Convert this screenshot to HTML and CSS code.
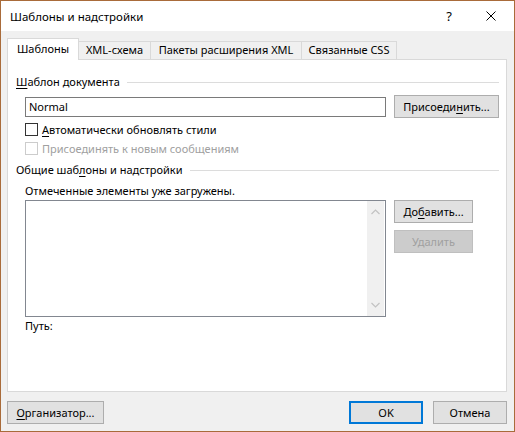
FILE: index.html
```html
<!DOCTYPE html>
<html lang="ru">
<head>
<meta charset="utf-8">
<title>Шаблоны и надстройки</title>
<link rel="stylesheet" href="styles.css">
</head>
<body>
<div class="window">
  <div class="titlebar">
    <span class="title">Шаблоны и надстройки</span>
    <span class="help">?</span>
    <span class="close">
      <svg width="10" height="10" viewBox="0 0 10 10"><path d="M0.5 0.5 L9.5 9.5 M9.5 0.5 L0.5 9.5" stroke="#000" stroke-width="1" fill="none"/></svg>
    </span>
  </div>
  <div class="client">
    <div class="tabs">
      <div class="tab tab-templates active">Шаблоны</div>
      <div class="tab tab-schema">XML-схема</div>
      <div class="tab tab-packs">Пакеты расширения XML</div>
      <div class="tab tab-css">Связанные CSS</div>
    </div>
    <div class="panel">
      <div class="group-head"><span><u>Ш</u>аблон документа</span><span class="rule"></span></div>
      <div class="indent">
        <div class="input-row">
          <div class="textbox">Normal</div>
          <div class="btn btn-attach">Присоеди<u>н</u>ить...</div>
        </div>
        <div class="check-row"><span class="checkbox"></span><span><u>А</u>втоматически обновлять стили</span></div>
        <div class="check-row disabled"><span class="checkbox"></span><span>Присоединять к новым сообщениям</span></div>
      </div>
      <div class="group-head group-head-2"><span>Общие шаб<u>л</u>оны и надстройки</span><span class="rule"></span></div>
      <div class="indent">
        <div class="note">Отмеченные элементы уже загружены.</div>
        <div class="list-row">
          <div class="listbox">
            <div class="list-items"></div>
            <div class="scrollbar">
              <svg width="9" height="6" viewBox="0 0 9 6"><path d="M0.5 5 L4.5 1 L8.5 5" stroke="#c2c2c2" stroke-width="1.2" fill="none"/></svg>
              <svg width="9" height="6" viewBox="0 0 9 6"><path d="M0.5 1 L4.5 5 L8.5 1" stroke="#c2c2c2" stroke-width="1.2" fill="none"/></svg>
            </div>
          </div>
          <div class="side-buttons">
            <div class="btn btn-side">До<u>б</u>авить...</div>
            <div class="btn btn-side btn-disabled">Удалить</div>
          </div>
        </div>
        <div class="path">Путь:</div>
      </div>
    </div>
    <div class="footer">
      <div class="btn btn-org"><u>О</u>рганизатор...</div>
      <div class="spacer"></div>
      <div class="btn btn-dlg btn-default">OK</div>
      <div class="btn btn-dlg">Отмена</div>
    </div>
  </div>
</div>
</body>
</html>
```

FILE: styles.css
```css
* { box-sizing: border-box; }
html, body { margin: 0; padding: 0; }
body {
  width: 515px;
  height: 432px;
  font-family: "Noto Sans", "Open Sans", sans-serif;
  font-size: 11px;
  color: #000;
  background: #f0f0f0;
  overflow: hidden;
}
u { text-decoration: underline; text-underline-offset: 2px; }

.window {
  width: 515px;
  height: 432px;
  border: 1px solid #a96b3a;
  display: flex;
  flex-direction: column;
}

.titlebar {
  height: 30px;
  background: #fff;
  display: flex;
  align-items: center;
  flex: none;
}
.title { padding-left: 9px; flex: 1; font-size: 11.5px; }
.help { font-size: 13px; width: 14px; text-align: center; margin-right: 30px; }
.close { width: 10px; height: 10px; display: flex; margin-right: 18px; margin-top: -1px; }

.client {
  flex: 1;
  background: #f0f0f0;
  padding: 7px 7px 7px 6px;
  display: flex;
  flex-direction: column;
}

.tabs {
  height: 21px;
  display: flex;
  align-items: flex-end;
  flex: none;
}
.tab {
  height: 18px;
  line-height: 16px;
  border: 1px solid #d9d9d9;
  border-bottom: none;
  margin-left: -1px;
  background: #f0f0f0;
  white-space: nowrap;
  text-align: center;
}
.tab:first-child { margin-left: 0; }
.tab-templates { width: 72px; }
.tab-schema { width: 73px; }
.tab-packs { width: 152px; }
.tab-css { width: 96px; }
.tab.active {
  height: 22px;
  margin-bottom: -1px;
  background: #fff;
  position: relative;
  z-index: 1;
  line-height: 19px;
}

.panel {
  height: 333px;
  flex: none;
  background: #fff;
  border: 1px solid #d9d9d9;
  padding: 14px 7px 0 8px;
}

.group-head {
  display: flex;
  align-items: center;
  height: 16px;
  line-height: 16px;
  white-space: nowrap;
}
.rule {
  flex: 1;
  height: 1px;
  background: #dcdcdc;
  margin-left: 7px;
}
.group-head-2 { margin-top: 6px; }

.indent { padding-left: 9px; }

.input-row {
  display: flex;
  align-items: center;
  gap: 8px;
  margin-top: 5px;
  height: 23px;
}
.textbox {
  width: 361px;
  height: 20px;
  border: 1px solid #7a7a7a;
  background: #fff;
  line-height: 18px;
  padding-left: 3px;
}

.btn {
  height: 23px;
  background: #e1e1e1;
  border: 1px solid #adadad;
  display: flex;
  align-items: center;
  justify-content: center;
  white-space: nowrap;
}
.btn-attach { width: 105px; }

.check-row {
  display: flex;
  align-items: center;
  height: 16px;
  margin-top: 3px;
}
.checkbox {
  width: 13px;
  height: 13px;
  border: 1px solid #333;
  background: #fff;
  margin-right: 4px;
  flex: none;
}
.check-row.disabled { color: #a0a0a0; }
.check-row.disabled .checkbox { border-color: #cccccc; }

.note { height: 16px; line-height: 16px; margin-top: 5px; }

.list-row {
  display: flex;
  gap: 8px;
  margin-top: 1px;
}
.listbox {
  width: 361px;
  height: 117px;
  border: 1px solid #828790;
  background: #fff;
  display: flex;
  padding: 0 1px 0 0;
}
.list-items { flex: 1; }
.scrollbar {
  width: 17px;
  background: #f0f0f0;
  display: flex;
  flex-direction: column;
  align-items: center;
  justify-content: space-between;
  padding: 8px 0 8px;
}
.side-buttons {
  display: flex;
  flex-direction: column;
  gap: 7px;
}
.btn-side { width: 79px; }
.btn-disabled {
  background: #cccccc;
  border-color: #bfbfbf;
  color: #a0a0a0;
}

.path { height: 16px; line-height: 16px; margin-top: 1px; }

.footer {
  display: flex;
  height: 23px;
  margin-top: 9px;
  flex: none;
}
.spacer { flex: 1; }
.btn-org { width: 97px; }
.btn-dlg { width: 74px; }
.btn-dlg + .btn-dlg { margin-left: 10px; }
.btn-default { border: 2px solid #0078d7; }
```
